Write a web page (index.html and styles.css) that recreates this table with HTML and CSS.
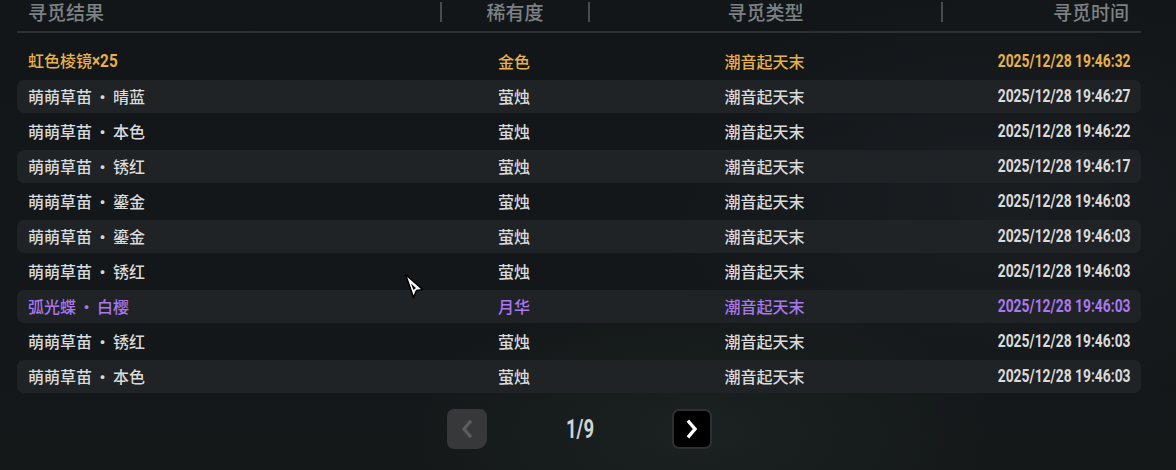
FILE: index.html
```html
<!DOCTYPE html>
<html lang="zh-CN">
<head>
<meta charset="utf-8">
<title>寻觅记录</title>
<link rel="stylesheet" href="styles.css">
</head>
<body>
<div class="page">
  <div class="table">
    <div class="head">
      <div class="hc c1"><span class="ht">寻觅结果</span></div>
      <div class="hc c2"><span class="dv"></span><span class="ht">稀有度</span></div>
      <div class="hc c3"><span class="dv"></span><span class="ht">寻觅类型</span></div>
      <div class="hc c4"><span class="dv"></span><span class="ht">寻觅时间</span></div>
    </div>
    <div class="rows">
      <div class="row gold"><div class="c1">虹色棱镜<span class="num">×25</span></div><div class="c2">金色</div><div class="c3">潮音起天末</div><div class="c4"><span class="time">2025/12/28 19:46:32</span></div></div>
      <div class="row alt"><div class="c1">萌萌草苗<span class="dot">・</span>晴蓝</div><div class="c2">萤烛</div><div class="c3">潮音起天末</div><div class="c4"><span class="time">2025/12/28 19:46:27</span></div></div>
      <div class="row"><div class="c1">萌萌草苗<span class="dot">・</span>本色</div><div class="c2">萤烛</div><div class="c3">潮音起天末</div><div class="c4"><span class="time">2025/12/28 19:46:22</span></div></div>
      <div class="row alt"><div class="c1">萌萌草苗<span class="dot">・</span>锈红</div><div class="c2">萤烛</div><div class="c3">潮音起天末</div><div class="c4"><span class="time">2025/12/28 19:46:17</span></div></div>
      <div class="row"><div class="c1">萌萌草苗<span class="dot">・</span>鎏金</div><div class="c2">萤烛</div><div class="c3">潮音起天末</div><div class="c4"><span class="time">2025/12/28 19:46:03</span></div></div>
      <div class="row alt"><div class="c1">萌萌草苗<span class="dot">・</span>鎏金</div><div class="c2">萤烛</div><div class="c3">潮音起天末</div><div class="c4"><span class="time">2025/12/28 19:46:03</span></div></div>
      <div class="row"><div class="c1">萌萌草苗<span class="dot">・</span>锈红</div><div class="c2">萤烛</div><div class="c3">潮音起天末</div><div class="c4"><span class="time">2025/12/28 19:46:03</span></div></div>
      <div class="row alt purple"><div class="c1">弧光蝶<span class="dot">・</span>白樱</div><div class="c2">月华</div><div class="c3">潮音起天末</div><div class="c4"><span class="time">2025/12/28 19:46:03</span></div></div>
      <div class="row"><div class="c1">萌萌草苗<span class="dot">・</span>锈红</div><div class="c2">萤烛</div><div class="c3">潮音起天末</div><div class="c4"><span class="time">2025/12/28 19:46:03</span></div></div>
      <div class="row alt"><div class="c1">萌萌草苗<span class="dot">・</span>本色</div><div class="c2">萤烛</div><div class="c3">潮音起天末</div><div class="c4"><span class="time">2025/12/28 19:46:03</span></div></div>
    </div>
    <div class="pager">
      <button class="pbtn prev" aria-label="上一页">
        <svg width="16" height="20" viewBox="0 0 16 20"><path d="M11 3 L5 10 L11 17" fill="none" stroke="#5c5d60" stroke-width="3.2" stroke-linecap="square"/></svg>
      </button>
      <div class="pnum"><span class="pn">1/9</span></div>
      <button class="pbtn next" aria-label="下一页">
        <svg width="16" height="20" viewBox="0 0 16 20"><path d="M5 3 L11 10 L5 17" fill="none" stroke="#ffffff" stroke-width="3.4" stroke-linecap="square"/></svg>
      </button>
    </div>
  </div>
  <svg class="cursor" width="22" height="28" viewBox="0 0 22 28"><path d="M1.5 1.5 L18.5 16.5 L12.5 17.5 L9.5 24.5 Z" fill="#ffffff" stroke="#000000" stroke-width="1.6" stroke-linejoin="round"/><path d="M7 10.5 L12 15 L9.5 17 Z" fill="#000"/></svg>
</div>
</body>
</html>
```
FILE: styles.css
```css
* { box-sizing: border-box; }
html, body { margin: 0; padding: 0; }
body {
  width: 1176px;
  height: 470px;
  overflow: hidden;
  background:
    radial-gradient(ellipse 420px 200px at 700px 430px, rgba(40, 52, 46, 0.35), rgba(0,0,0,0) 70%),
    radial-gradient(ellipse 500px 300px at 1000px 200px, rgba(40, 42, 46, 0.35), rgba(0,0,0,0) 70%),
    linear-gradient(180deg, #121619 0%, #141819 100%);
  font-family: "Noto Sans CJK SC", "Noto Sans", sans-serif;
  color: #dcdcdc;
}
.page { position: relative; width: 1176px; height: 470px; }
.table { margin-left: 17px; width: 1124px; }
.head, .row {
  display: grid;
  grid-template-columns: 412px 148px 353px 190px;
  padding: 0 10px 0 11px;
  align-items: center;
}
.head {
  height: 33px;
  padding-bottom: 7px;
  border-bottom: 2px solid #2b3033;
  color: #7d8184;
  font-size: 19px;
  font-weight: 500;
}
.hc {
  display: flex;
  align-items: center;
  height: 24px;
}
.ht { line-height: 24px; }
.dv {
  width: 2px;
  height: 20px;
  background: #474c4f;
  flex: none;
}
.c2 .ht, .c3 .ht { flex: 1; text-align: center; }
.c4 .ht { flex: 1; text-align: right; padding-right: 2px; }
.c2, .c3 { text-align: center; }
.c4 { text-align: right; white-space: nowrap; }
.rows {
  margin-top: 12px;
  display: flex;
  flex-direction: column;
  gap: 2px;
}
.row {
  height: 33px;
  padding-bottom: 2px;
  border-radius: 7px;
  font-size: 16px;
  font-weight: 500;
  color: #dadada;
  line-height: 22px;
  white-space: nowrap;
}
.row.alt { background: #1f2325; }
.row.gold { color: #e6b04a; }
.row.purple { color: #a878ec; }
.dot { display: inline-block; margin: 0 2.5px; }
.num {
  display: inline-block;
  font-family: Roboto, sans-serif;
  font-weight: 700;
  font-size: 18px;
  transform: scaleX(0.85);
  transform-origin: left center;
}
.time {
  display: inline-block;
  font-family: Roboto, sans-serif;
  font-weight: 700;
  font-size: 18px;
  transform: scaleX(0.77);
  transform-origin: right center;
  white-space: nowrap;
}
.pager {
  margin-top: 16px;
  display: flex;
  justify-content: center;
  align-items: center;
  padding-left: 1px;
}
.pbtn {
  width: 40px;
  height: 40px;
  border-radius: 7px;
  display: flex;
  align-items: center;
  justify-content: center;
  padding: 0;
}
.prev { background: #37383a; border: none; border-bottom-right-radius: 10px; }
.next { background: #000000; border: 2px solid #2e3032; }
.pnum {
  width: 185px;
  text-align: center;
}
.pn {
  display: inline-block;
  font-family: Roboto, sans-serif;
  font-weight: 700;
  font-size: 25px;
  color: #d2d2d2;
  transform: scaleX(0.74);
}
.cursor { position: absolute; left: 404px; top: 273px; }
```
